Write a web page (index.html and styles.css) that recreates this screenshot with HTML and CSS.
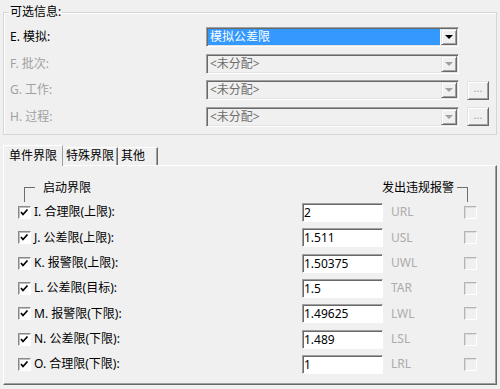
FILE: index.html
```html
<!DOCTYPE html>
<html>
<head>
  <title>界限设置</title>
  <link rel="stylesheet" href="styles.css">
</head>
<body>
  <fieldset class="info">
    <legend>可选信息:</legend>
    <div class="info-grid">
      <label class="field-label">E. 模拟:</label>
      <div class="combo">
        <span class="combo-text selected">模拟公差限</span>
        <span class="drop-btn"><i class="arrow"></i></span>
      </div>
      <span></span>

      <label class="field-label disabled">F. 批次:</label>
      <div class="combo off">
        <span class="combo-text">&lt;未分配&gt;</span>
        <span class="drop-btn"><i class="arrow"></i></span>
      </div>
      <span></span>

      <label class="field-label disabled">G. 工作:</label>
      <div class="combo off">
        <span class="combo-text">&lt;未分配&gt;</span>
        <span class="drop-btn"><i class="arrow"></i></span>
      </div>
      <button type="button" class="more-btn" disabled>...</button>

      <label class="field-label disabled">H. 过程:</label>
      <div class="combo off">
        <span class="combo-text">&lt;未分配&gt;</span>
        <span class="drop-btn"><i class="arrow"></i></span>
      </div>
      <button type="button" class="more-btn" disabled>...</button>
    </div>
  </fieldset>

  <div class="tabs">
    <div class="tab active">单件界限</div>
    <div class="tab">特殊界限</div>
    <div class="tab">其他</div>
  </div>

  <div class="panel">
    <div class="panel-head">
      <div class="group-left"><span class="corner"></span>启动界限</div>
      <div class="group-right">发出违规报警<span class="corner"></span></div>
    </div>

    <div class="limits">
      <span class="check on"><svg viewBox="0 0 11 11"><polyline points="2,5 4,7.5 8.5,2.5"/></svg></span>
      <label class="limit-label">I. 合理限(上限):</label>
      <div class="cell"><input type="text" class="num" value="2"></div>
      <span class="code">URL</span>
      <span class="check off"></span>

      <span class="check on"><svg viewBox="0 0 11 11"><polyline points="2,5 4,7.5 8.5,2.5"/></svg></span>
      <label class="limit-label">J. 公差限(上限):</label>
      <div class="cell"><input type="text" class="num" value="1.511"></div>
      <span class="code">USL</span>
      <span class="check off"></span>

      <span class="check on"><svg viewBox="0 0 11 11"><polyline points="2,5 4,7.5 8.5,2.5"/></svg></span>
      <label class="limit-label">K. 报警限(上限):</label>
      <div class="cell"><input type="text" class="num" value="1.50375"></div>
      <span class="code">UWL</span>
      <span class="check off"></span>

      <span class="check on"><svg viewBox="0 0 11 11"><polyline points="2,5 4,7.5 8.5,2.5"/></svg></span>
      <label class="limit-label">L. 公差限(目标):</label>
      <div class="cell"><input type="text" class="num" value="1.5"></div>
      <span class="code">TAR</span>
      <span class="check off"></span>

      <span class="check on"><svg viewBox="0 0 11 11"><polyline points="2,5 4,7.5 8.5,2.5"/></svg></span>
      <label class="limit-label">M. 报警限(下限):</label>
      <div class="cell"><input type="text" class="num" value="1.49625"></div>
      <span class="code">LWL</span>
      <span class="check off"></span>

      <span class="check on"><svg viewBox="0 0 11 11"><polyline points="2,5 4,7.5 8.5,2.5"/></svg></span>
      <label class="limit-label">N. 公差限(下限):</label>
      <div class="cell"><input type="text" class="num" value="1.489"></div>
      <span class="code">LSL</span>
      <span class="check off"></span>

      <span class="check on"><svg viewBox="0 0 11 11"><polyline points="2,5 4,7.5 8.5,2.5"/></svg></span>
      <label class="limit-label">O. 合理限(下限):</label>
      <div class="cell"><input type="text" class="num" value="1"></div>
      <span class="code">LRL</span>
      <span class="check off"></span>
    </div>
  </div>
</body>
</html>
```

FILE: styles.css
```css
/* dialog base */
body {
  margin: 0;
  width: 500px;
  height: 389px;
  background-color: #f0f0f0;
  font-family: "Noto Sans", "Noto Sans CJK SC", sans-serif;
  font-size: 12px;
  line-height: 16px;
  color: #000;
  overflow: hidden;
}

/* top group box */
.info {
  margin: 4px 3px 0;
  padding: 7px 6px 7px 6px;
  border: 1px solid #d5d5d5;
  box-shadow: inset 1px 1px #fff;
  min-width: 0;
}

.info legend {
  padding: 0 1px;
  margin-left: -1px;
  line-height: 16px;
}

.info-grid {
  display: grid;
  grid-template-columns: 196px 253px 30px;
  grid-auto-rows: 20px;
  row-gap: 6.67px;
  align-items: center;
}

.field-label.disabled {
  color: #a0a0a0;
}

.combo {
  display: flex;
  height: 20px;
  box-sizing: border-box;
  padding: 1px;
  border: 1px solid;
  border-color: #a0a0a0 #fff #fff #a0a0a0;
  box-shadow: inset 1px 1px #696969, inset -1px -1px #e3e3e3;
  background-color: #fff;
}

.combo.off {
  background-color: #f0f0f0;
}

.combo-text {
  flex: 1;
  padding-left: 2px;
  line-height: 16px;
  color: #6d6d6d;
}

.combo-text.selected {
  background-color: #3399ff;
  color: #fff;
  margin-right: 1px;
}

.drop-btn {
  width: 16px;
  box-sizing: border-box;
  display: flex;
  align-items: center;
  justify-content: center;
  background-color: #f0f0f0;
  border: 1px solid;
  border-color: #e3e3e3 #696969 #696969 #e3e3e3;
  box-shadow: inset 1px 1px #fff, inset -1px -1px #a0a0a0;
}

.arrow {
  width: 0;
  height: 0;
  border-left: 4px solid transparent;
  border-right: 4px solid transparent;
  border-top: 4px solid #000;
}

.combo.off .arrow {
  border-top-color: #a0a0a0;
}

.more-btn {
  justify-self: end;
  width: 22px;
  height: 19px;
  padding: 0 0 4px;
  font-family: inherit;
  font-size: 11px;
  line-height: 12px;
  color: #a0a0a0;
  background-color: #f0f0f0;
  border: 1px solid;
  border-color: #e3e3e3 #696969 #696969 #e3e3e3;
  box-shadow: inset 1px 1px #fff, inset -1px -1px #a0a0a0;
}

/* tabs */
.tabs {
  display: flex;
  align-items: flex-end;
  margin: 10px 3px 0;
  height: 20px;
}

.tab {
  height: 18px;
  box-sizing: border-box;
  padding: 0 3px 0 3px;
  line-height: 16px;
  border: 1px solid;
  border-color: #fff #696969 transparent #fff;
  border-bottom: none;
  box-shadow: inset -1px 0 #a0a0a0;
}

.tab.active {
  height: 21px;
  margin-bottom: -1px;
  padding: 0 5px 0 5px;
  line-height: 20px;
  position: relative;
  background-color: #f0f0f0;
  border-right-color: #a0a0a0;
  box-shadow: none;
}

.tab + .tab {
  border-left: none;
}

.tab:last-child {
  padding-right: 12px;
}

/* tab page */
.panel {
  margin: 0 3px;
  height: 220px;
  box-sizing: border-box;
  padding: 14px 0 0 14px;
  border: 1px solid;
  border-color: #fff #696969 #696969 #fff;
  box-shadow: inset -1px -1px #a0a0a0;
}

.panel-head {
  display: flex;
  justify-content: space-between;
  width: 450px;
  height: 16px;
  margin-bottom: 7px;
}

.group-left,
.group-right {
  display: flex;
  align-items: flex-start;
}

.corner {
  width: 11px;
  height: 15px;
  margin-top: 7px;
  box-sizing: border-box;
  border-top: 1px solid #6d6d6d;
}

.group-left .corner {
  margin-left: 6px;
  margin-right: 8px;
  border-left: 1px solid #6d6d6d;
}

.group-right .corner {
  margin-left: 3px;
  border-right: 1px solid #6d6d6d;
}

.limits {
  display: grid;
  grid-template-columns: 16px 268px 89px 73px 13px;
  grid-auto-rows: 19px;
  row-gap: 6.33px;
  align-items: center;
}

.check {
  width: 13px;
  height: 13px;
  box-sizing: border-box;
  border: 1px solid;
  border-color: #8a8a8a #fff #fff #8a8a8a;
  box-shadow: inset 1px 1px #bdbdbd;
  background-color: #fff;
}

.check svg {
  display: block;
  width: 11px;
  height: 11px;
}

.check polyline {
  fill: none;
  stroke: #000;
  stroke-width: 1.7;
}

.check.off {
  background-color: #f0f0f0;
  border-color: #b4b4b4 #fff #fff #b4b4b4;
  box-shadow: inset 1px 1px #dcdcdc;
}

.num {
  width: 81px;
  height: 19px;
  box-sizing: border-box;
  margin: 0;
  padding: 0 0 0 1px;
  font-family: inherit;
  font-size: 12px;
  color: #000;
  background-color: #fff;
  border: 1px solid;
  border-color: #a0a0a0 #fff #fff #a0a0a0;
  box-shadow: inset 1px 1px #696969;
  outline: none;
}

.code {
  color: #acacac;
}
```
